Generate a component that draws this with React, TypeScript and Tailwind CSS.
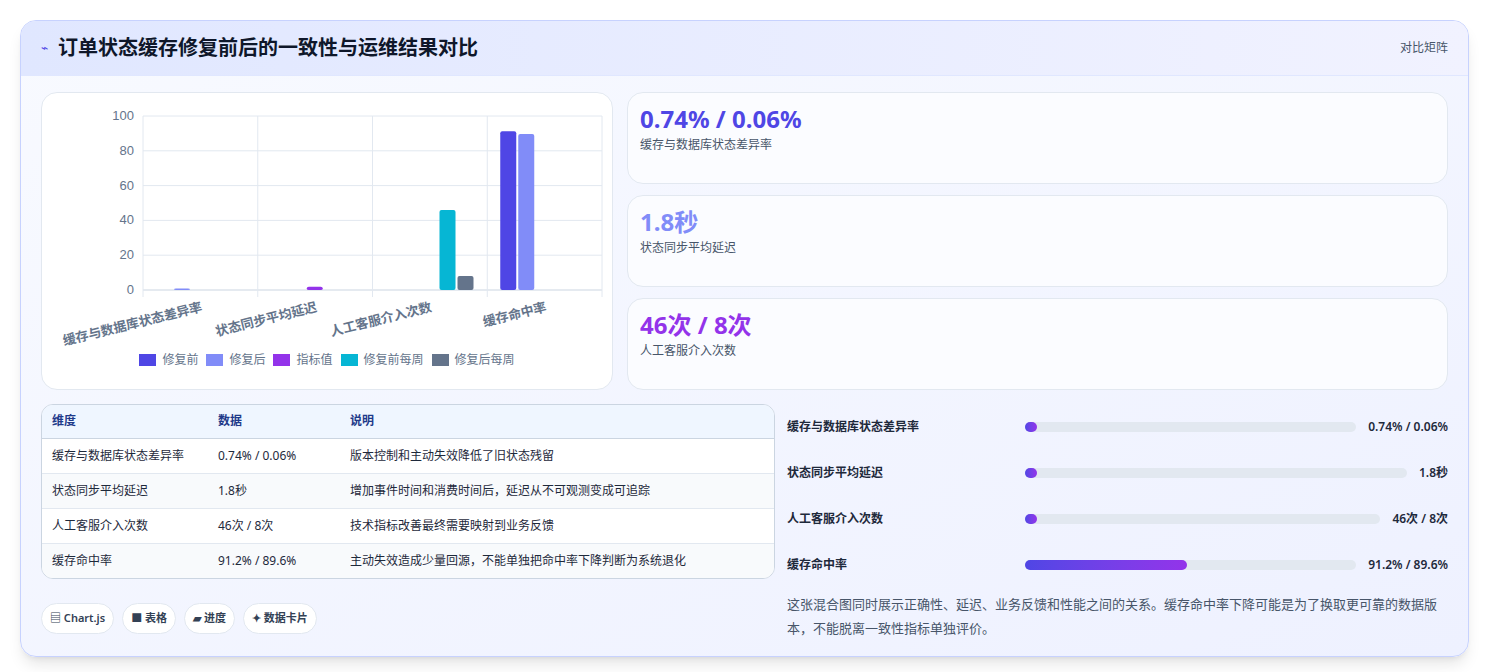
import React from 'react'

const font = { fontFamily: '"Noto Sans", "Noto Sans CJK SC", sans-serif' }

const cats = ['缓存与数据库状态差异率', '状态同步平均延迟', '人工客服介入次数', '缓存命中率']
const colors = ['#4f46e5', '#818cf8', '#9333ea', '#06b6d4', '#64748b']
const bars: [number, number, number][] = [
  [0, 1, 0.74],
  [1, 2, 1.8],
  [2, 3, 46],
  [2, 4, 8],
  [3, 0, 91.2],
  [3, 1, 89.6],
]

function Chart() {
  const x0 = 141, y0 = 289, h = 174, cw = 114.75
  return (
    <svg width="572" height="298" viewBox="40 92 572 298" className="block">
      {[0, 20, 40, 60, 80, 100].map((v) => {
        const y = y0 - (v / 100) * h
        return (
          <g key={v}>
            <line x1={x0} x2={600} y1={y} y2={y} stroke={v === 0 ? '#cbd5e1' : '#e2e8f0'} />
            <text x={132} y={y + 4} textAnchor="end" fontSize="13" fill="#64748b" fontFamily="Liberation Sans, sans-serif">{v}</text>
          </g>
        )
      })}
      {[0, 1, 2, 3, 4].map((i) => (
        <line key={i} x1={x0 + i * cw} x2={x0 + i * cw} y1={115} y2={296} stroke="#e2e8f0" />
      ))}
      {bars.map(([c, s, v], i) => {
        const bh = Math.max((v / 100) * h, 1.5)
        return <rect key={i} x={x0 + c * cw + 13 + s * 18} y={y0 - bh} width={16} height={bh} rx={2} fill={colors[s]} />
      })}
      {cats.map((c, i) => (
        <text key={c} x={x0 + i * cw + 60} y={310} textAnchor="end" fontSize="13" fontWeight="600" fill="#64748b"
          transform={`rotate(-14 ${x0 + i * cw + 60} 310)`} style={font}>{c}</text>
      ))}
    </svg>
  )
}

const legend = ['修复前', '修复后', '指标值', '修复前每周', '修复后每周']

const stats = [
  { v: '0.74% / 0.06%', l: '缓存与数据库状态差异率', c: 'text-[#4f46e5]' },
  { v: '1.8秒', l: '状态同步平均延迟', c: 'text-[#818cf8]' },
  { v: '46次 / 8次', l: '人工客服介入次数', c: 'text-[#9333ea]' },
]

const rows = [
  ['缓存与数据库状态差异率', '0.74% / 0.06%', '版本控制和主动失效降低了旧状态残留'],
  ['状态同步平均延迟', '1.8秒', '增加事件时间和消费时间后，延迟从不可观测变成可追踪'],
  ['人工客服介入次数', '46次 / 8次', '技术指标改善最终需要映射到业务反馈'],
  ['缓存命中率', '91.2% / 89.6%', '主动失效造成少量回源，不能单独把命中率下降判断为系统退化'],
]

const progress = [
  { l: '缓存与数据库状态差异率', v: '0.74% / 0.06%', p: 2 },
  { l: '状态同步平均延迟', v: '1.8秒', p: 2 },
  { l: '人工客服介入次数', v: '46次 / 8次', p: 2 },
  { l: '缓存命中率', v: '91.2% / 89.6%', p: 49 },
]

export default function App() {
  return (
    <div className="min-h-[672px] bg-white p-5" style={font}>
      <div className="overflow-hidden rounded-2xl border border-[#c7d2fe] bg-gradient-to-br from-[#f8faff] to-[#eef1ff] shadow-lg">
        <div className="flex h-[55px] items-center justify-between border-b border-[#e0e7ff] bg-gradient-to-r from-[#e0e7ff] to-[#f1f2ff] px-5">
          <div className="flex items-center gap-2.5">
            <span className="text-xs text-[#4f46e5]">⌁</span>
            <span className="text-xl font-bold text-[#0f172a]">订单状态缓存修复前后的一致性与运维结果对比</span>
          </div>
          <span className="text-xs text-[#475569]">对比矩阵</span>
        </div>
        <div className="px-5 pt-4 pb-4">
          <div className="flex gap-3.5">
            <div className="h-[298px] w-[572px] shrink-0 rounded-2xl border border-[#e2e8f0] bg-white relative">
              <Chart />
              <div className="absolute left-0 right-0 top-[259px] flex justify-center gap-2 text-xs text-[#64748b]">
                {legend.map((l, i) => (
                  <span key={l} className="flex items-center gap-1.5">
                    <span className="inline-block h-3 w-[17px]" style={{ background: colors[i] }} />
                    {l}
                  </span>
                ))}
              </div>
            </div>
            <div className="flex flex-1 flex-col gap-[11px]">
              {stats.map((s) => (
                <div key={s.l} className="h-[92px] rounded-2xl border border-[#e2e8f0] bg-[#fbfcff] px-3 pt-2.5">
                  <div className={`text-2xl font-bold ${s.c}`}>{s.v}</div>
                  <div className="mt-0.5 text-xs text-[#475569]">{s.l}</div>
                </div>
              ))}
            </div>
          </div>
          <div className="mt-3.5 flex gap-3">
            <div className="w-[734px] shrink-0">
              <div className="overflow-hidden rounded-xl border border-[#cbd5e1] bg-white">
                <table className="w-full text-xs">
                  <thead>
                    <tr className="h-[33px] border-b border-[#cbd5e1] bg-[#eff6ff] text-left text-[#1e3a8a]">
                      <th className="w-[176px] pl-2.5 font-semibold">维度</th>
                      <th className="w-[132px] font-semibold">数据</th>
                      <th className="font-semibold">说明</th>
                    </tr>
                  </thead>
                  <tbody>
                    {rows.map((r, i) => (
                      <tr key={i} className={`h-[35px] text-[#1e293b] ${i < 3 ? 'border-b border-[#e2e8f0]' : ''} ${i % 2 ? 'bg-[#f8fafc]' : 'bg-white'}`}>
                        <td className="pl-2.5">{r[0]}</td>
                        <td>{r[1]}</td>
                        <td>{r[2]}</td>
                      </tr>
                    ))}
                  </tbody>
                </table>
              </div>
              <div className="mt-6 flex gap-2 text-[11px] font-semibold text-[#334155]">
                {['▤ Chart.js', '■ 表格', '▰ 进度', '✦ 数据卡片'].map((t) => (
                  <span key={t} className="rounded-full border border-[#e2e8f0] bg-white px-2 py-1.5">{t}</span>
                ))}
              </div>
            </div>
            <div className="flex-1">
              {progress.map((p) => (
                <div key={p.l} className="flex h-[46px] items-center gap-3 text-xs font-semibold text-[#1e293b]">
                  <span className="w-[226px] shrink-0">{p.l}</span>
                  <div className="h-2.5 flex-1 rounded-full bg-[#e2e8f0]">
                    <div className="h-2.5 min-w-[12px] rounded-full bg-gradient-to-r from-[#4f46e5] to-[#9333ea]" style={{ width: `${p.p}%` }} />
                  </div>
                  <span className="shrink-0 text-right">{p.v}</span>
                </div>
              ))}
              <p className="mt-1 text-[13px] leading-6 text-[#475569]">
                这张混合图同时展示正确性、延迟、业务反馈和性能之间的关系。缓存命中率下降可能是为了换取更可靠的数据版本，不能脱离一致性指标单独评价。
              </p>
            </div>
          </div>
        </div>
      </div>
    </div>
  )
}
